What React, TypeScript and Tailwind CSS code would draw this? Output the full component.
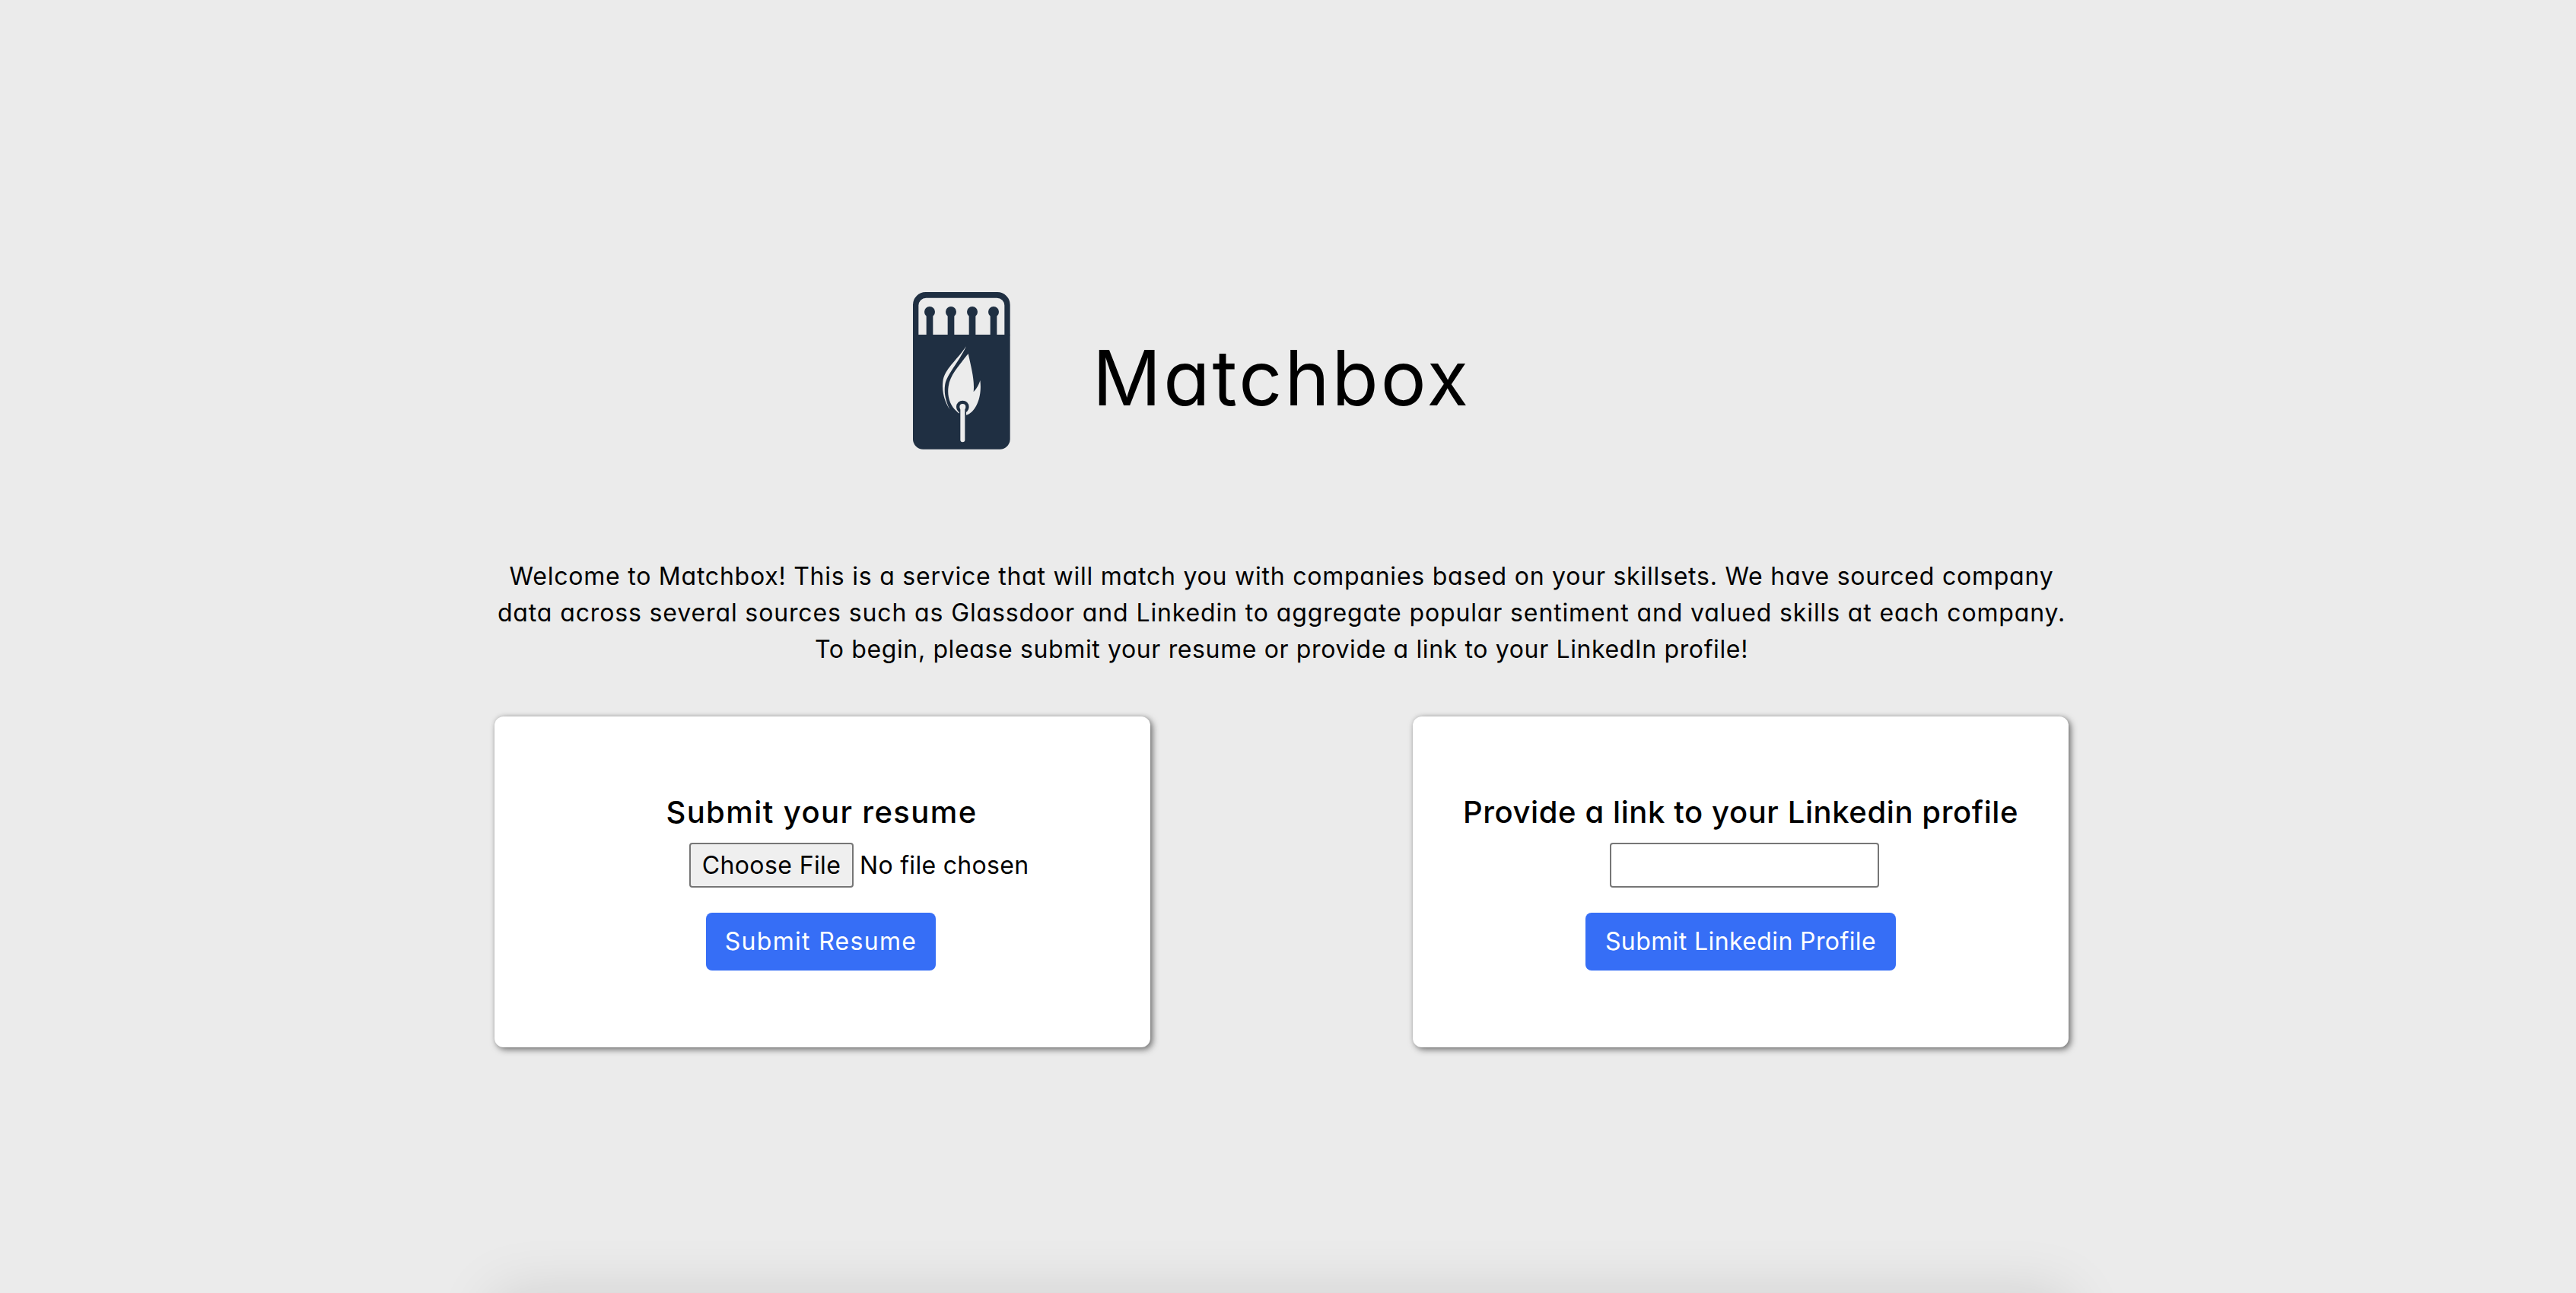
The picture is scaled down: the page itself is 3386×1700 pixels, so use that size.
const font = "font-['Inter','Liberation_Sans',sans-serif] [font-feature-settings:'cv11']";

function Logo() {
  return (
    <svg viewBox="120 72 384 621" width="128" height="207" className="shrink-0">
      <path d="M120 242V122a50 50 0 0 1 50-50H453a50 50 0 0 1 50 50V242H481V126a30 30 0 0 0-30-31H172a30 30 0 0 0-30 31V242Z" fill="#1f2f42" />
      <path d="M120 240H503V652a40 40 0 0 1-40 40H160a40 40 0 0 1-40-40Z" fill="#1f2f42" />
      {[186, 270, 354, 438].map((x) => (
        <g key={x} fill="#1f2f42">
          <circle cx={x} cy={150} r={21} />
          <rect x={x - 13} y={150} width={26} height={95} />
        </g>
      ))}
      <path d="M338 315C350 370 364 420 359 466C372 452 381 436 385 420C392 470 378 535 335 556C320 562 305 556 290 540C268 520 254 485 260 445C266 400 300 365 338 315Z" fill="#ececec" />
      <path d="M330 286C290 345 245 375 238 425C233 470 248 510 266 536C250 505 241 470 247 435C256 395 300 350 330 286Z" fill="#ececec" />
      <circle cx={316} cy={525} r={25} fill="#1f2f42" />
      <rect x={302} y={540} width={28} height={40} fill="#1f2f42" />
      <path d="M307 525a9 9 0 0 1 18 0V655a9 9 0 0 1-18 0Z" fill="#ececec" />
      <circle cx={316} cy={525} r={12} fill="#ececec" />
    </svg>
  );
}

function Card({
  title,
  titleClass,
  children,
  button,
  buttonClass,
}: {
  title: string;
  titleClass: string;
  children: React.ReactNode;
  button: string;
  buttonClass: string;
}) {
  return (
    <div className="flex h-[435px] w-[862px] flex-col items-center rounded-[12px] bg-white pt-[96px] shadow-[3px_3px_8px_#707070,0_-1px_5px_#d0d0d0]">
      <h3 className={`h-[60px] text-[40px] leading-[60px] font-medium whitespace-nowrap text-black ${titleClass}`}>{title}</h3>
      <div className="mt-[10px] h-[59px] w-full">{children}</div>
      <button className={`mt-[33px] h-[76px] rounded-[8px] bg-[#366ef6] text-[32px] text-white whitespace-nowrap ${buttonClass}`}>{button}</button>
    </div>
  );
}

export default function App() {
  return (
    <div className={`h-[1700px] overflow-hidden bg-[#ebebeb] pr-[17px] text-black ${font}`}>
      <div className="mx-auto w-[2069px] pt-[384px]">
        <header className="ml-[550px] flex h-[207px] items-center">
          <Logo />
          <h1 className="ml-[108px] pt-[18px] text-[100px] leading-none font-normal tracking-[3px]">Matchbox</h1>
        </header>
        <p className="mt-[143px] text-center text-[32px] leading-[48px] whitespace-nowrap">
          <span className="block tracking-[0.77px]">Welcome to Matchbox! This is a service that will match you with companies based on your skillsets. We have sourced company</span>
          <span className="block tracking-[0.87px]">data across several sources such as Glassdoor and Linkedin to aggregate popular sentiment and valued skills at each company.</span>
          <span className="block tracking-[0.63px]">To begin, please submit your resume or provide a link to your LinkedIn profile!</span>
        </p>
        <div className="mt-[64px] flex justify-between">
          <Card title="Submit your resume" titleClass="mr-[2px] tracking-[1.4px]" button="Submit Resume" buttonClass="mr-[4px] w-[302px] tracking-[1.3px]">
            <div className="ml-[256px] flex h-full items-center">
              <button className="h-full w-[216px] rounded-[4px] border-2 border-[#767676] bg-[#efefef] text-[32px] tracking-[0.4px] whitespace-nowrap">Choose File</button>
              <span className="ml-[8px] text-[32px] tracking-[0.3px] whitespace-nowrap">No file chosen</span>
            </div>
          </Card>
          <Card title="Provide a link to your Linkedin profile" titleClass="tracking-[0.6px]" button="Submit Linkedin Profile" buttonClass="w-[408px] tracking-[0.4px]">
            <div className="flex h-full justify-center pl-[9px]">
              <input type="text" aria-label="LinkedIn profile" className="h-full w-[354px] rounded-[4px] border-2 border-[#767676] bg-white" />
            </div>
          </Card>
        </div>
        <div className="mt-[324px] h-[400px] rounded-[12px] bg-white shadow-[0_0_80px_rgba(0,0,0,0.12)]" />
      </div>
    </div>
  );
}
